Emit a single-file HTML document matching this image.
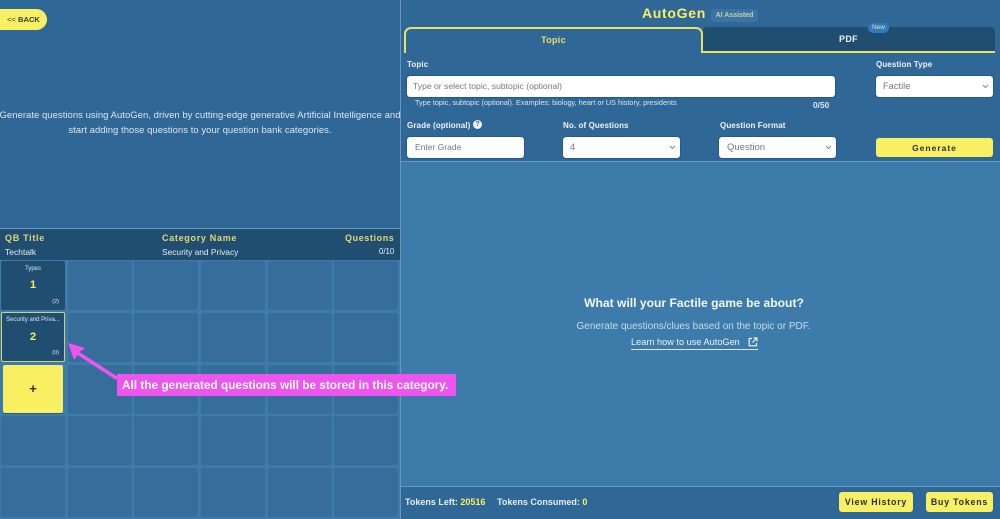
<!DOCTYPE html>
<html><head><meta charset="utf-8"><style>
*{box-sizing:border-box}
html,body{margin:0;padding:0}
body{width:1000px;height:519px;position:relative;overflow:hidden;background:#3d7bab;font-family:"Liberation Sans",sans-serif;color:#fff}
.a{position:absolute;white-space:nowrap}
.cell{position:absolute;width:64px;height:49px;background:#376d9b;border-radius:2px}
.inp{position:absolute;background:#fff;border-radius:3px;color:#777;font-size:9px;line-height:21px;padding-left:7px;height:21px;box-shadow:0 0 0 1px #24598a}
.lab{position:absolute;font-size:8px;font-weight:bold;color:#f1f3f5;white-space:nowrap;letter-spacing:.1px}
.btn{position:absolute;background:#f8ef62;border-radius:3px;color:#2a3030;font-weight:bold;text-align:center;font-size:9px;letter-spacing:.8px}
.chev{position:absolute;right:4px;top:8px}
.cat{position:absolute;width:64px;background:#1f4e70;border-radius:2px;text-align:center}
</style></head><body>
<div class="a" style="left:0;top:0;width:400px;height:229px;background:#2f6796"></div>
<div class="a" style="left:0;top:9px;width:47px;height:21px;background:#f8ef62;border-radius:0 11px 11px 0;color:#3a3f3a;font-size:7.6px;font-weight:bold;line-height:21px;padding-left:7px"><span style="font-weight:normal">&lt;&lt;</span> BACK</div>
<div class="a" style="left:-10px;top:108px;width:420px;text-align:center;font-size:9.5px;letter-spacing:.03px;line-height:15px;color:#dce6ee">Generate questions using AutoGen, driven by cutting-edge generative Artificial Intelligence and<br>start adding those questions to your question bank categories.</div>

<div class="a" style="left:0;top:228px;width:400px;height:1px;background:#6a98bb"></div>
<div class="a" style="left:0;top:229px;width:400px;height:31px;background:#1f4e70"></div>
<div class="a" style="left:5px;top:233px;font-size:9px;font-weight:bold;letter-spacing:.7px;color:#e3d873">QB Title</div>
<div class="a" style="left:162px;top:233px;font-size:9px;font-weight:bold;letter-spacing:.7px;color:#e3d873">Category Name</div>
<div class="a" style="left:345px;top:233px;font-size:9px;font-weight:bold;letter-spacing:.6px;color:#e3d873">Questions</div>
<div class="a" style="left:5px;top:247px;font-size:8.5px;color:#e6edf2">Techtalk</div>
<div class="a" style="left:162px;top:247px;font-size:8.4px;color:#e6edf2">Security and Privacy</div>
<div class="a" style="left:379px;top:247px;font-size:7.8px;color:#e6edf2">0/10</div>

<div class="cell" style="left:68px;top:261px"></div><div class="cell" style="left:134px;top:261px"></div><div class="cell" style="left:201px;top:261px"></div><div class="cell" style="left:268px;top:261px"></div><div class="cell" style="left:334px;top:261px"></div>
<div class="cell" style="left:68px;top:313px"></div><div class="cell" style="left:134px;top:313px"></div><div class="cell" style="left:201px;top:313px"></div><div class="cell" style="left:268px;top:313px"></div><div class="cell" style="left:334px;top:313px"></div>
<div class="cell" style="left:68px;top:365px"></div><div class="cell" style="left:134px;top:365px"></div><div class="cell" style="left:201px;top:365px"></div><div class="cell" style="left:268px;top:365px"></div><div class="cell" style="left:334px;top:365px"></div>
<div class="cell" style="left:1px;top:416px"></div><div class="cell" style="left:68px;top:416px"></div><div class="cell" style="left:134px;top:416px"></div><div class="cell" style="left:201px;top:416px"></div><div class="cell" style="left:268px;top:416px"></div><div class="cell" style="left:334px;top:416px"></div>
<div class="cell" style="left:1px;top:468px"></div><div class="cell" style="left:68px;top:468px"></div><div class="cell" style="left:134px;top:468px"></div><div class="cell" style="left:201px;top:468px"></div><div class="cell" style="left:268px;top:468px"></div><div class="cell" style="left:334px;top:468px"></div>

<div class="cat" style="left:1px;top:261px;height:49px">
<div class="a" style="left:0;width:100%;top:5px;font-size:6px;color:#dce6ee">Types</div>
<div class="a" style="left:0;width:100%;top:18px;font-size:11px;font-weight:bold;color:#f8ef62">1</div>
<div class="a" style="right:6px;top:38px;font-size:5.5px;color:#e6edf2">(2)</div></div>
<div class="cat" style="left:1px;top:312px;height:50px;border:1px solid #d6cd78">
<div class="a" style="left:0;width:100%;top:1.5px;padding-top:2px;font-size:6px;color:#dce6ee">Security and Priva...</div>
<div class="a" style="left:0;width:100%;top:18px;font-size:11px;font-weight:bold;color:#f8ef62">2</div>
<div class="a" style="right:5px;top:37px;font-size:5.5px;color:#e6edf2">(0)</div></div>
<div class="a" style="left:3px;top:365px;width:60px;height:48px;background:#f8ef62;border-radius:2px;text-align:center;color:#333;font-size:13px;line-height:48px;font-weight:bold;box-shadow:0 1px 0 #24598a">+</div>

<svg class="a" style="left:60px;top:335px" width="70" height="50" viewBox="0 0 70 50"><path d="M8 8 L25 13 L19.5 17 L58 42 L56 45 L17.5 20 L14 25 Z" fill="#ee55ee"/></svg>
<div class="a" style="left:117px;top:374px;width:339px;height:22px;background:#ee55ee;color:#fff;font-size:11.8px;font-weight:bold;line-height:22px;padding-left:5px">All the generated questions will be stored in this category.</div>

<div class="a" style="left:400px;top:0;width:1px;height:374px;background:#6a98bb"></div>
<div class="a" style="left:400px;top:396px;width:1px;height:123px;background:#6a98bb"></div>

<div class="a" style="left:401px;top:0;width:599px;height:162px;background:#2f6796"></div>
<div class="a" style="left:642px;top:5px;font-size:14px;font-weight:bold;letter-spacing:.7px;color:#f8ef62">AutoGen</div>
<div class="a" style="left:711px;top:9px;width:47px;height:13px;background:#3a74a6;border-radius:3px;text-align:center;font-size:7px;line-height:13px;font-weight:bold;color:#c5d49a">AI Assisted</div>

<div class="a" style="left:703px;top:27px;width:292px;height:26px;background:#1f4e70;border-bottom:2px solid #e9e067;border-radius:4px 4px 0 0;text-align:center;font-size:9px;font-weight:bold;line-height:24px;color:#f1f3f5;letter-spacing:.3px;padding-right:1px">PDF</div>
<div class="a" style="left:404px;top:27px;width:299px;height:26px;border:2px solid #e9e067;border-bottom:0;border-radius:7px 7px 0 0;text-align:center;font-size:9px;font-weight:bold;line-height:23px;color:#e9e067;letter-spacing:.3px">Topic</div>
<div class="a" style="left:868px;top:23px;width:21px;height:10px;background:#3079bd;border-radius:5px;text-align:center;font-size:6.5px;line-height:10px;color:#d8e6b0">New</div>

<div class="lab" style="left:407px;top:60px">Topic</div>
<div class="inp" style="left:407px;top:76px;width:428px;font-size:8.6px;padding-left:6px">Type or select topic, subtopic (optional)</div>
<div class="a" style="left:415px;top:98px;font-size:7.3px;color:#dce6ee">Type topic, subtopic (optional). Examples: biology, heart or US history, presidents</div>
<div class="a" style="left:813px;top:100px;font-size:8.4px;font-weight:bold;color:#dce6ee">0/50</div>

<div class="lab" style="left:876px;top:60px">Question Type</div>
<div class="inp" style="left:876px;top:76px;width:117px;font-size:9.3px">Factile<svg class="chev" width="7" height="5" viewBox="0 0 7 5"><path d="M1 1l2.5 2.5L6 1" fill="none" stroke="#888"/></svg></div>

<div class="lab" style="left:407px;top:121px">Grade (optional)</div>
<div class="a" style="left:473px;top:120px;width:9px;height:9px;border-radius:50%;background:#f1f3f5;color:#2f6796;font-size:7px;line-height:9px;text-align:center;font-weight:bold">?</div>
<div class="inp" style="left:407px;top:137px;width:117px;padding-left:8px;font-size:8.5px">Enter Grade</div>

<div class="lab" style="left:563px;top:121px">No. of Questions</div>
<div class="inp" style="left:563px;top:137px;width:117px;font-size:9.5px">4<svg class="chev" width="7" height="5" viewBox="0 0 7 5"><path d="M1 1l2.5 2.5L6 1" fill="none" stroke="#888"/></svg></div>

<div class="lab" style="left:720px;top:121px">Question Format</div>
<div class="inp" style="left:719px;top:137px;width:117px;font-size:9.5px;padding-left:8px">Question<svg class="chev" width="7" height="5" viewBox="0 0 7 5"><path d="M1 1l2.5 2.5L6 1" fill="none" stroke="#888"/></svg></div>

<div class="btn" style="left:876px;top:138px;width:117px;height:19px;line-height:20px;font-size:8.5px;letter-spacing:1px">Generate</div>

<div class="a" style="left:401px;top:161px;width:599px;height:1px;background:#6a98bb"></div>

<div class="a" style="left:400px;top:296px;width:588px;text-align:center;font-size:12.1px;font-weight:bold;color:#f4f7f9">What will your Factile game be about?</div>
<div class="a" style="left:400px;top:321px;width:587px;text-align:center;font-size:10px;color:#c9dbe8">Generate questions/clues based on the topic or PDF.</div>
<div class="a" style="left:631px;top:337px;font-size:9.2px;color:#eef3f6;width:127px;height:13px;border-bottom:1px solid #dce6ee">Learn how to use AutoGen</div>
<svg class="a" style="left:748px;top:337px" width="10" height="10" viewBox="0 0 10 10"><path d="M4 1.5H1.2V8.8H8.5V6M5.5 1H9V4.5M9 1L4.5 5.5" fill="none" stroke="#eef3f6" stroke-width="1.2"/></svg>

<div class="a" style="left:401px;top:486px;width:599px;height:33px;background:#2f6796;border-top:1px solid #6a98bb"></div>
<div class="a" style="left:405px;top:497px;font-size:9px;font-weight:bold;color:#e6edf2">Tokens Left: <span style="color:#f8ef62">20516</span></div>
<div class="a" style="left:497px;top:497px;font-size:9px;font-weight:bold;color:#e6edf2">Tokens Consumed: <span style="color:#f8ef62">0</span></div>
<div class="btn" style="left:839px;top:492px;width:74px;height:20px;line-height:21px;font-size:8.8px">View History</div>
<div class="btn" style="left:926px;top:492px;width:67px;height:20px;line-height:21px;font-size:8.8px">Buy Tokens</div>
</body></html>
